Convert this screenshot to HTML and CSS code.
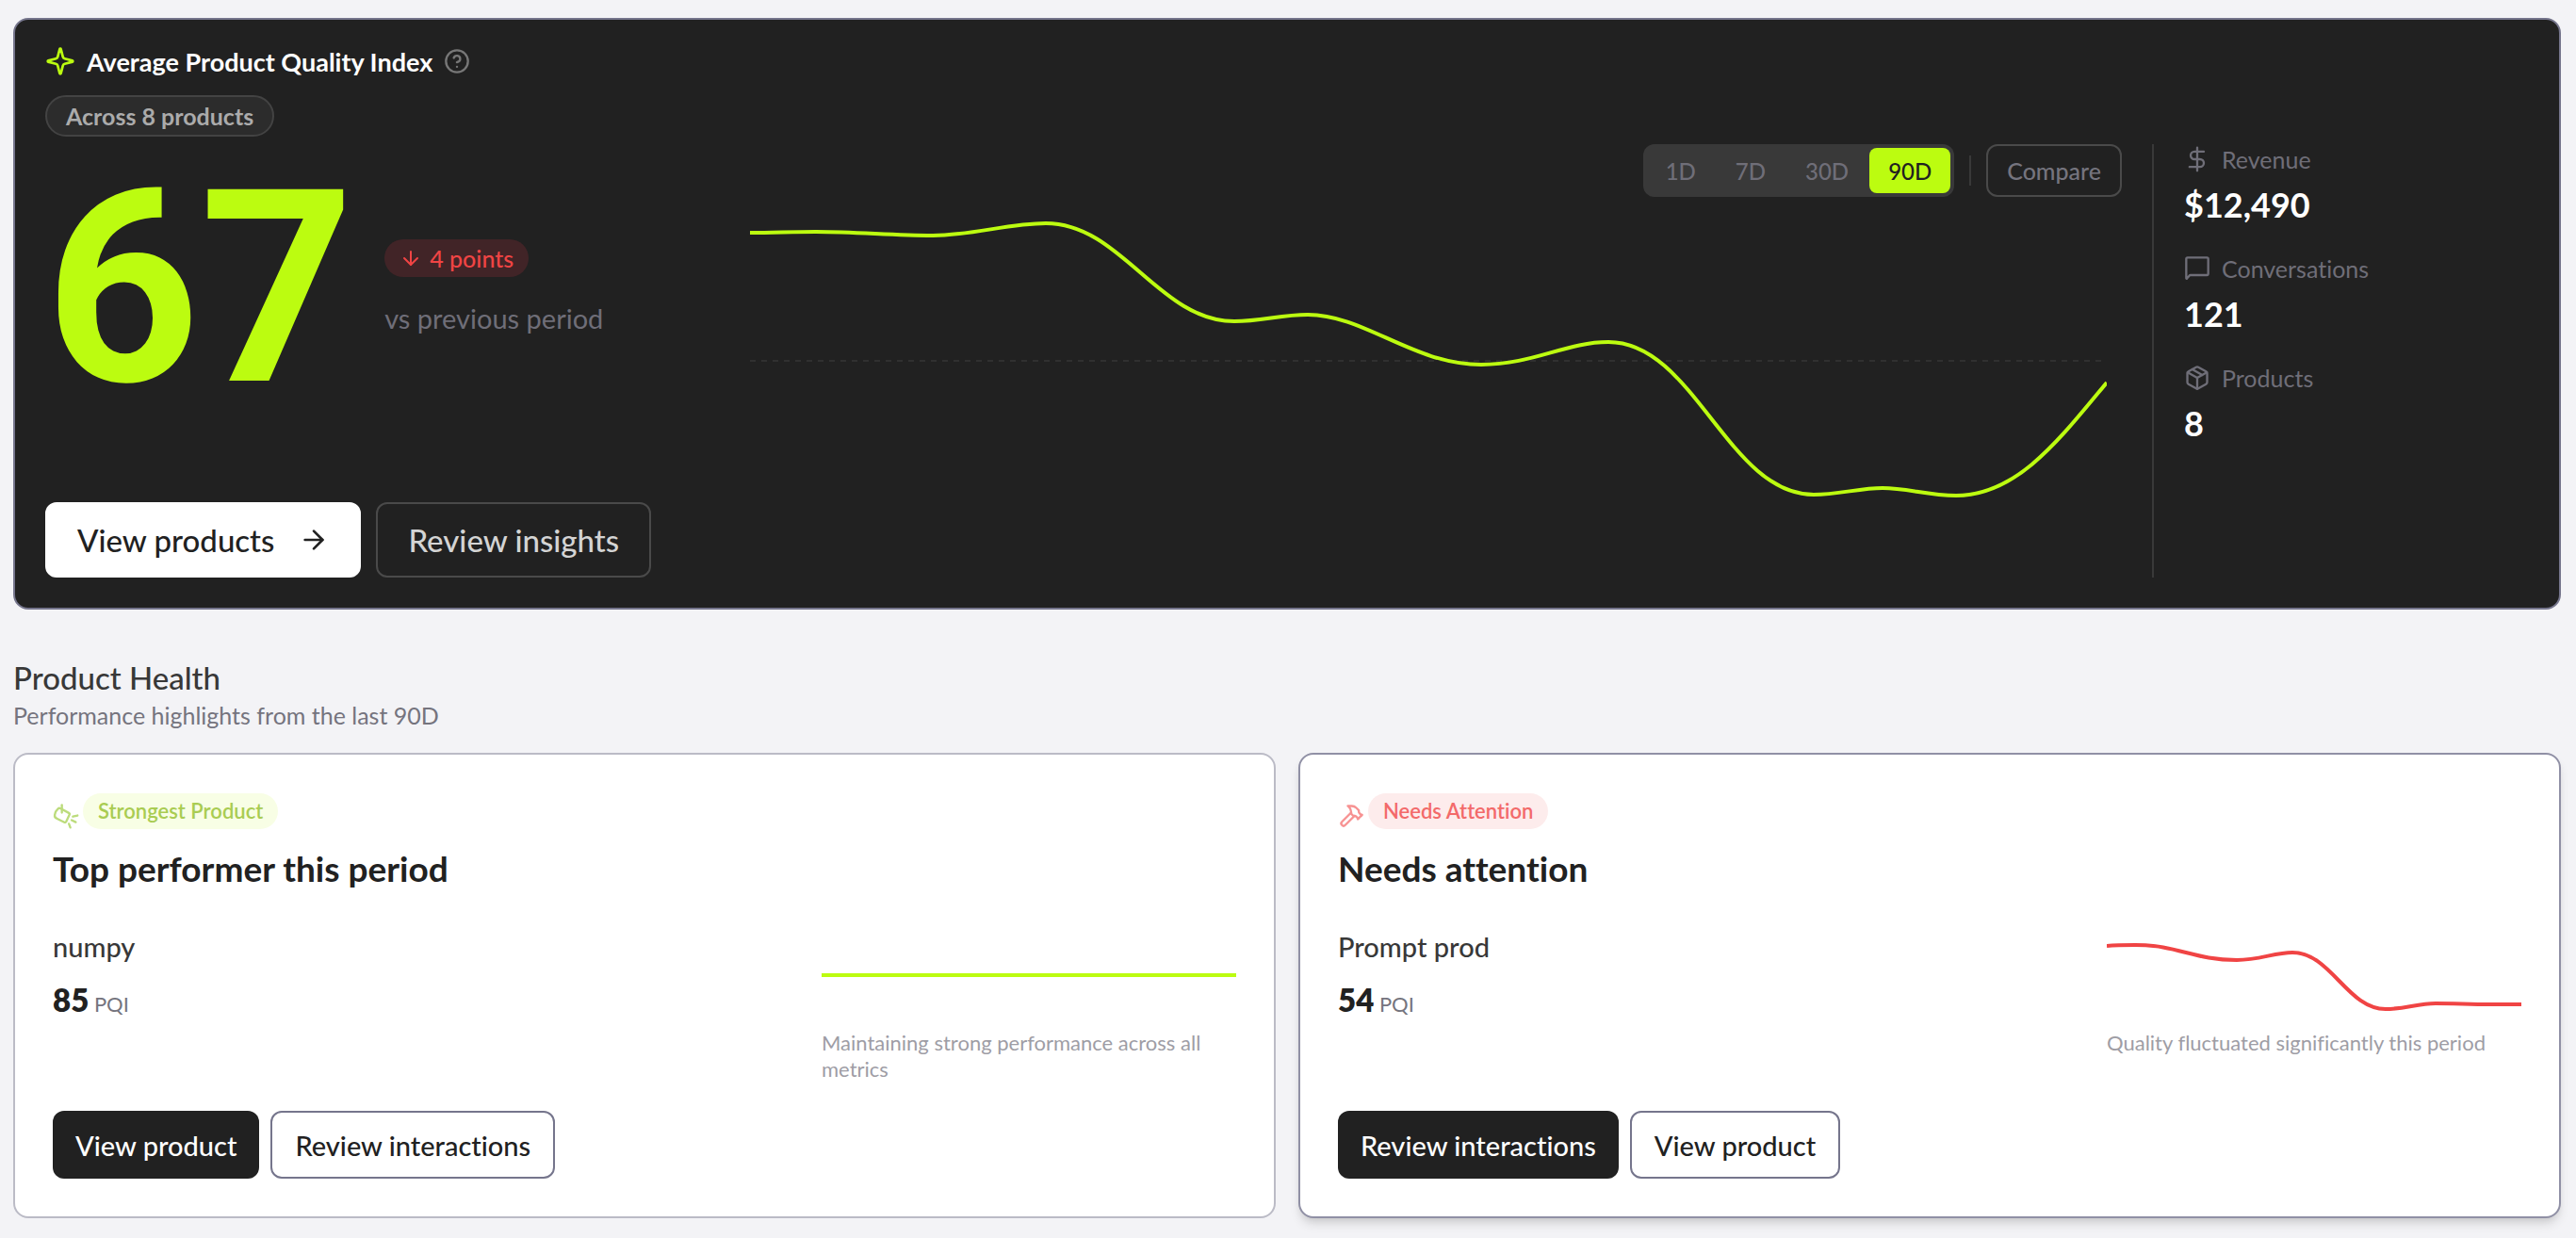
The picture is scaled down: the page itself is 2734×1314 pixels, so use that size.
FILE: index.html
```html
<!DOCTYPE html>
<html lang="en">
<head>
    <meta charset="UTF-8">
    <meta name="viewport" content="width=device-width, initial-scale=1.0">
    <title>Product Quality Index</title>
    <link rel="stylesheet" href="styles.css">
</head>
<body>

<section class="hero">
    <div class="hero-title">
        <svg class="icon icon-sparkle" viewBox="0 0 24 24"><path d="M9.937 15.5A2 2 0 0 0 8.5 14.063l-6.135-1.582a.5.5 0 0 1 0-.962L8.5 9.936A2 2 0 0 0 9.937 8.5l1.582-6.135a.5.5 0 0 1 .963 0L14.063 8.5A2 2 0 0 0 15.5 9.937l6.135 1.581a.5.5 0 0 1 0 .964L15.5 14.063a2 2 0 0 0-1.437 1.437l-1.582 6.135a.5.5 0 0 1-.963 0z"/></svg>
        <h1>Average Product Quality Index</h1>
        <svg class="icon icon-help" viewBox="0 0 24 24"><circle cx="12" cy="12" r="10"/><path d="M9.09 9a3 3 0 0 1 5.83 1c0 2-3 3-3 3"/><path d="M12 17h.01"/></svg>
    </div>
    <span class="hero-badge">Across 8 products</span>

    <div class="hero-body">
        <div class="score">
            <div class="score-row">
                <div class="score-value">67</div>
                <div class="score-change">
                    <span class="change-pill">
                        <svg class="icon icon-down" viewBox="0 0 24 24"><path d="M12 5v14"/><path d="m19 12-7 7-7-7"/></svg>
                        4 points
                    </span>
                    <span class="change-note">vs previous period</span>
                </div>
            </div>
            <div class="hero-actions">
                <button type="button" class="btn-lg btn-white">
                    View products
                    <svg class="icon icon-arrow" viewBox="0 0 24 24"><path d="M5 12h14"/><path d="m12 5 7 7-7 7"/></svg>
                </button>
                <button type="button" class="btn-lg btn-ghost">Review insights</button>
            </div>
        </div>

        <div class="trend">
            <div class="trend-controls">
                <div class="range">
                    <button type="button">1D</button>
                    <button type="button">7D</button>
                    <button type="button">30D</button>
                    <button type="button" class="active">90D</button>
                </div>
                <span class="divider"></span>
                <button type="button" class="compare">Compare</button>
            </div>
            <svg class="trend-chart" viewBox="0 0 1440 388" preserveAspectRatio="none">
                <line class="baseline" x1="0" y1="158" x2="1440" y2="158"/>
                <path class="line line-lime" d="M0 22C25 22 45 21 70 21C115 21 150 25 194 25C235 25 275 12 314 12C394 12 434 116 514 116C543 116 563 109 592 109C652 109 704 162 776 162C831 162 866 138 911 138C1002 138 1038 300 1129 300C1155 300 1178 293 1202 293C1228 293 1250 301 1280 301C1345 301 1390 241 1440 181"/>
            </svg>
        </div>

        <dl class="metrics">
            <div class="metric">
                <dt><svg class="icon" viewBox="0 0 24 24"><path d="M12 1.5v21"/><path d="M18 5H9.5a3.5 3.5 0 0 0 0 7h5a3.5 3.5 0 0 1 0 7H5"/></svg>Revenue</dt>
                <dd>$12,490</dd>
            </div>
            <div class="metric">
                <dt><svg class="icon" viewBox="0 0 24 24"><path d="M2 20.8V3.2A1.2 1.2 0 0 1 3.2 2h17.6a1.2 1.2 0 0 1 1.2 1.2v13.6a1.2 1.2 0 0 1-1.2 1.2H5.8a1.2 1.2 0 0 0-.85.35L2.6 21.1a.35.35 0 0 1-.6-.3z"/></svg>Conversations</dt>
                <dd>121</dd>
            </div>
            <div class="metric">
                <dt><svg class="icon" viewBox="0 0 24 24"><path d="M11 21.73a2 2 0 0 0 2 0l7-4A2 2 0 0 0 21 16V8a2 2 0 0 0-1-1.73l-7-4a2 2 0 0 0-2 0l-7 4A2 2 0 0 0 3 8v8a2 2 0 0 0 1 1.73z"/><path d="M12 22V12"/><path d="M3.29 7 12 12l8.71-5"/><path d="m7.5 4.27 9 5.15"/></svg>Products</dt>
                <dd>8</dd>
            </div>
        </dl>
    </div>
</section>

<section class="health">
    <h2>Product Health</h2>
    <p class="health-sub">Performance highlights from the last 90D</p>

    <div class="cards">
        <article class="card card-strong">
            <div class="card-tag">
                <svg class="icon" viewBox="0 0 24 24"><path d="M8.3 2v7"/><path d="M7 5.2 14.6 9.3a1.3 1.3 0 0 1 .55 1.7l-2.9 6.2a1.3 1.3 0 0 1-1.75.6L3.6 14.3a3 3 0 0 1-1.8-3.3c.4-2.2 1.5-4.2 3-5.5a1.9 1.9 0 0 1 2.2-.3z"/><path d="m18.3 12.6 4.2-1"/><path d="m17.2 15.8 3.7 1.9"/><path d="m14.7 19.2 1.3 3.4"/></svg>
                <span class="tag">Strongest Product</span>
            </div>
            <h3>Top performer this period</h3>
            <div class="card-body">
                <div>
                    <p class="product-name">numpy</p>
                    <p class="pqi"><strong>85</strong> PQI</p>
                </div>
                <div class="card-chart">
                    <svg class="spark" viewBox="0 0 440 96" preserveAspectRatio="none"><path class="line line-lime" d="M0 48H440"/></svg>
                    <p class="caption">Maintaining strong performance across all metrics</p>
                </div>
            </div>
            <div class="card-actions">
                <button type="button" class="btn btn-dark">View product</button>
                <button type="button" class="btn btn-outline">Review interactions</button>
            </div>
        </article>

        <article class="card card-attention">
            <div class="card-tag">
                <svg class="icon" viewBox="0 0 24 24"><path d="m15 12-8.373 8.373a1 1 0 1 1-3-3L12 9"/><path d="m18 15 4-4"/><path d="m21.5 11.5-1.914-1.914A2 2 0 0 1 19 8.172V7l-2.26-2.26a6 6 0 0 0-4.202-1.756L9 2.96l.92.82A6.18 6.18 0 0 1 12 8.4V10l2 2h1.172a2 2 0 0 1 1.414.586L18.5 14.5"/></svg>
                <span class="tag">Needs Attention</span>
            </div>
            <h3>Needs attention</h3>
            <div class="card-body">
                <div>
                    <p class="product-name">Prompt prod</p>
                    <p class="pqi"><strong>54</strong> PQI</p>
                </div>
                <div class="card-chart">
                    <svg class="spark" viewBox="0 0 440 96" preserveAspectRatio="none"><path class="line line-red" d="M0 17C10 16 20 16 30 16C76 16 92 32 138 32C162 32 178 24 197 24C238 24 255 84 296 84C316 84 330 78 349 78C370 78 385 79 407 79L440 79"/></svg>
                    <p class="caption">Quality fluctuated significantly this period</p>
                </div>
            </div>
            <div class="card-actions">
                <button type="button" class="btn btn-dark">Review interactions</button>
                <button type="button" class="btn btn-outline">View product</button>
            </div>
        </article>
    </div>
</section>

</body>
</html>
```
FILE: styles.css
```css
* {
    box-sizing: border-box;
}
body {
    font-family: Lato, sans-serif;
    font-variant-ligatures: none;
    margin: 0;
    padding: 19px 16px 20px 14px;
    background-color: #f3f3f6;
    color: #212121;
}
h1, h2, h3, p, dl, dd {
    margin: 0;
}
button {
    font-family: inherit;
    font-weight: 500;
    font-variant-ligatures: none;
    cursor: pointer;
}
.icon {
    width: 28px;
    height: 28px;
    flex: none;
    fill: none;
    stroke: currentColor;
    stroke-width: 2;
    stroke-linecap: round;
    stroke-linejoin: round;
}

/* Hero */
.hero {
    background-color: #212121;
    border: 2px solid #75758c;
    border-radius: 16px;
    padding: 24px 32px 32px;
}
.hero-title {
    display: flex;
    align-items: center;
    gap: 12px;
    height: 40px;
    margin-bottom: 16px;
}
.hero-title h1 {
    font-size: 27px;
    font-weight: 700;
    color: #fff;
}
.icon-sparkle {
    width: 32px;
    height: 32px;
    color: #bcfc10;
}
.icon-help {
    color: #777;
}
.hero-badge {
    display: block;
    width: fit-content;
    padding: 0 20px;
    border: 2px solid #434343;
    border-radius: 22px;
    background-color: #2c2c2c;
    color: #ababab;
    font-size: 25px;
    font-weight: 700;
    line-height: 40px;
}
.hero-body {
    display: grid;
    grid-template-columns: 700px 1fr 400px;
    gap: 32px;
    min-height: 460px;
    margin-top: 8px;
}

/* Score */
.score {
    display: flex;
    flex-direction: column;
    justify-content: space-between;
}
.score-row {
    display: flex;
    align-items: center;
    gap: 32px;
}
.score-value {
    padding-top: 4px;
    font-family: Roboto, sans-serif;
    font-size: 286px;
    font-weight: 700;
    line-height: 300px;
    color: #bcfc10;
}
.score-change {
    display: flex;
    flex-direction: column;
    align-items: flex-start;
    gap: 26px;
}
.change-pill {
    display: flex;
    align-items: center;
    gap: 8px;
    height: 40px;
    padding: 0 16px;
    border-radius: 20px;
    background-color: #412427;
    color: #f04444;
    font-size: 25px;
    font-weight: 500;
}
.icon-down {
    width: 24px;
    height: 24px;
}
.change-note {
    font-size: 29px;
    line-height: 36px;
    color: #6f6e78;
}
.hero-actions {
    display: flex;
    gap: 16px;
}
.btn-lg {
    display: flex;
    align-items: center;
    gap: 26px;
    height: 80px;
    padding: 0 32px;
    border: 2px solid #fff;
    border-radius: 12px;
    font-size: 33px;
}
.btn-white {
    background-color: #fff;
    color: #212121;
}
.btn-ghost {
    background-color: transparent;
    border-color: #4a4a4a;
    color: #d4d4d4;
}
.icon-arrow {
    width: 32px;
    height: 32px;
}

/* Trend */
.trend {
    display: flex;
    flex-direction: column;
    gap: 16px;
}
.trend-controls {
    display: flex;
    justify-content: flex-end;
    align-items: center;
    gap: 16px;
}
.range {
    display: flex;
    gap: 2px;
    padding: 4px;
    border-radius: 12px;
    background-color: #393939;
}
.range button {
    height: 48px;
    padding: 0 20px;
    border: none;
    border-radius: 8px;
    background-color: transparent;
    color: #6f6e78;
    font-size: 24px;
}
.range .active {
    background-color: #bcfc10;
    color: #212121;
}
.divider {
    width: 2px;
    height: 32px;
    background-color: #393939;
}
.compare {
    height: 56px;
    padding: 0 20px;
    border: 2px solid #4a4a4a;
    border-radius: 12px;
    background-color: transparent;
    color: #75747e;
    font-size: 25px;
}
.trend-chart {
    display: block;
    height: 388px;
    margin: 0 16px;
}
.baseline {
    stroke: #303030;
    stroke-width: 2;
    stroke-dasharray: 6 6;
}
.line {
    fill: none;
    stroke-width: 4;
    vector-effect: non-scaling-stroke;
}
.line-lime {
    stroke: #bcfc10;
}
.line-red {
    stroke: #f04444;
}

/* Metrics */
.metrics {
    display: flex;
    flex-direction: column;
    gap: 32px;
    padding-left: 32px;
    border-left: 2px solid #393939;
}
.metric dt {
    display: flex;
    align-items: center;
    gap: 12px;
    margin-bottom: 12px;
    font-size: 25px;
    line-height: 32px;
    color: #6f6e78;
}
.metric dd {
    font-size: 36px;
    font-weight: 700;
    line-height: 40px;
    color: #fff;
}

/* Product health */
.health {
    margin-top: 52px;
}
.health h2 {
    font-size: 33px;
    font-weight: 500;
    line-height: 40px;
    color: #383838;
}
.health-sub {
    margin: 4px 0 24px;
    font-size: 25px;
    line-height: 32px;
    color: #75747e;
}
.cards {
    display: grid;
    grid-template-columns: 1fr 1fr;
    gap: 24px;
}
.card {
    display: flex;
    flex-direction: column;
    padding: 40px;
    border: 2px solid #bbbbc6;
    border-radius: 16px;
    background-color: #fff;
}
.card-attention {
    border-color: #9090a5;
    box-shadow: 0 8px 12px -2px rgba(0, 0, 0, 0.12), 0 4px 8px -4px rgba(0, 0, 0, 0.12);
}
.card-tag {
    display: flex;
    align-items: flex-end;
    gap: 4px;
    height: 39px;
    margin-bottom: 20px;
}
.tag {
    padding: 0 16px;
    border-radius: 19px;
    font-size: 22px;
    font-weight: 600;
    line-height: 38px;
}
.card-strong .icon {
    color: #bcdc7c;
}
.card-strong .tag {
    background-color: #f8fee5;
    color: #a9cc52;
}
.card-attention .icon {
    color: #f79292;
}
.card-attention .tag {
    background-color: #fdecec;
    color: #f36a6a;
}
.card h3 {
    font-size: 37px;
    font-weight: 700;
    line-height: 44px;
}
.card-body {
    display: flex;
    justify-content: space-between;
    margin: 43px 0 30px;
}
.product-name {
    font-size: 29px;
    font-weight: 500;
    line-height: 36px;
    color: #383838;
}
.pqi {
    margin-top: 18px;
    font-size: 22px;
    line-height: 40px;
    color: #75747e;
}
.pqi strong {
    font-size: 33px;
    font-weight: 800;
    color: #212121;
}
.card-chart {
    width: 440px;
}
.spark {
    display: block;
    width: 100%;
    height: 96px;
}
.caption {
    margin-top: 10px;
    font-size: 22px;
    line-height: 28px;
    color: #9e9da5;
}
.card-actions {
    display: flex;
    gap: 12px;
    margin-top: auto;
}
.btn {
    height: 72px;
    padding: 0 24px;
    border-radius: 12px;
    font-size: 29px;
}
.btn-dark {
    border: none;
    background-color: #212121;
    color: #fff;
}
.btn-outline {
    border: 2px solid #75758c;
    background-color: #fff;
    color: #212121;
}
```
